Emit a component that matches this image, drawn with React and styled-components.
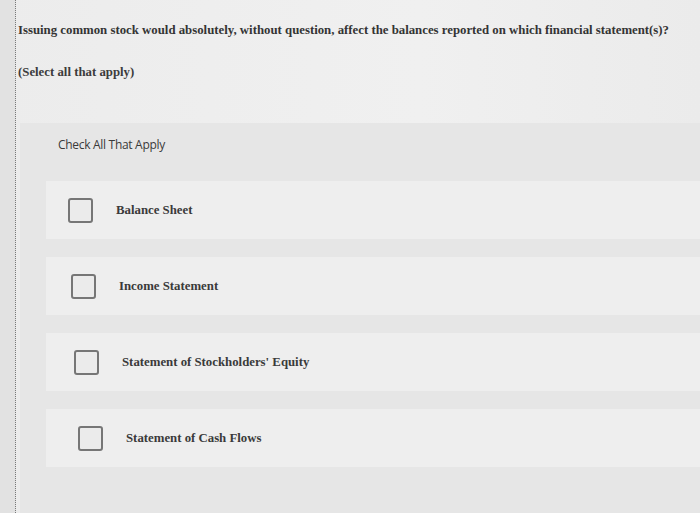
import React from 'react';
import styled, { createGlobalStyle } from 'styled-components';

const GlobalStyle = createGlobalStyle`
  html, body {
    margin: 0;
    padding: 0;
    background: #ebebeb;
  }
`;

const Page = styled.div`
  display: flex;
  width: 700px;
  height: 513px;
  overflow: hidden;
  background: linear-gradient(90deg, #ececec 0%, #f0f0f0 60%, #ebebeb 100%);
`;

const Gutter = styled.div`
  width: 15px;
  flex-shrink: 0;
  background: #e2e2e2;
  border-right: 1px dotted #7a7a7a;
`;

const Main = styled.main`
  flex: 1;
  display: flex;
  flex-direction: column;
  font-family: "Liberation Serif", "Times New Roman", serif;
  color: #343434;
`;

const Question = styled.p`
  margin: 22px 0 0 2px;
  font-size: 12.8px;
  font-weight: 700;
  line-height: 16px;
  white-space: nowrap;
`;

const Hint = styled.p`
  margin: 26px 0 0 2px;
  font-size: 12.8px;
  font-weight: 700;
  line-height: 16px;
  color: #3c3c3c;
`;

const Panel = styled.section`
  margin: 43px 0 0 4px;
  flex: 1;
  background: #e6e6e6;
  display: flex;
  flex-direction: column;
  gap: 18px;
  padding-bottom: 20px;
`;

const PanelTitle = styled.div`
  height: 42px;
  display: flex;
  align-items: center;
  padding-left: 38px;
  margin-bottom: -2px;
  font-family: "Open Sans", "Liberation Sans", sans-serif;
  font-size: 12px;
  letter-spacing: -0.3px;
  color: #3a3a3a;
`;

const Option = styled.label`
  height: 58px;
  margin-left: 26px;
  display: flex;
  align-items: center;
  gap: 23px;
  padding-left: ${p => p.$indent}px;
  background: #eeeeee;
`;

const Box = styled.span`
  width: 21px;
  height: 21px;
  border: 2px solid #767676;
  border-radius: 3px;
  background: #ebebeb;
  flex-shrink: 0;
`;

const OptionText = styled.span`
  font-size: 12.8px;
  font-weight: 700;
  color: #3a3a3a;
`;

const options = [
  { label: 'Balance Sheet', indent: 22 },
  { label: 'Income Statement', indent: 25 },
  { label: "Statement of Stockholders' Equity", indent: 28 },
  { label: 'Statement of Cash Flows', indent: 32 },
];

export default function App() {
  return (
    <>
      <GlobalStyle />
      <Page>
        <Gutter />
        <Main>
          <Question>
            Issuing common stock would absolutely, without question, affect the balances reported on which financial statement(s)?
          </Question>
          <Hint>(Select all that apply)</Hint>
          <Panel>
            <PanelTitle>Check All That Apply</PanelTitle>
            {options.map(o => (
              <Option key={o.label} $indent={o.indent}>
                <Box />
                <OptionText>{o.label}</OptionText>
              </Option>
            ))}
          </Panel>
        </Main>
      </Page>
    </>
  );
}
